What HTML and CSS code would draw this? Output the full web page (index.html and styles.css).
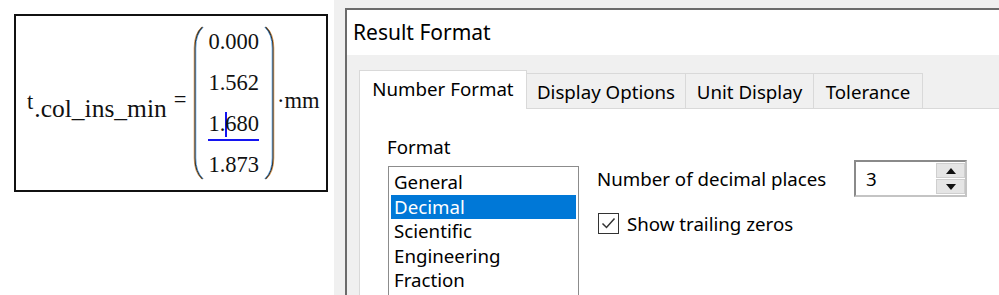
FILE: index.html
```html
<!DOCTYPE html>
<html lang="en">
<head>
<meta charset="UTF-8" />
<title>Result Format</title>
<link rel="stylesheet" href="styles.css">
</head>
<body>
<div class="sheet">
  <div class="region">
    <span class="var">t<span class="sub">.col_ins_min</span></span>
    <span class="eq">=</span>
    <div class="matrix">
      <svg class="paren" width="12" height="154" viewBox="0 0 12 154">
        <path d="M10.5 1 Q3 8 3 22 L3 132 Q3 146 10.5 153" stroke="#e8a050" stroke-width="1" fill="none" transform="translate(-0.8 0)"/>
        <path d="M10.5 1 Q3 8 3 22 L3 132 Q3 146 10.5 153" stroke="#58a8f0" stroke-width="1" fill="none" transform="translate(0.8 0)"/>
        <path d="M10.5 1 Q3 8 3 22 L3 132 Q3 146 10.5 153" stroke="#333" stroke-width="1.1" fill="none"/>
      </svg>
      <div class="cells">
        <div class="cell">0.000</div>
        <div class="cell">1.562</div>
        <div class="cell"><span class="num sel">1.<span class="cursor"></span>680</span></div>
        <div class="cell">1.873</div>
      </div>
      <svg class="paren" width="12" height="154" viewBox="0 0 12 154">
        <path d="M1.5 1 Q9 8 9 22 L9 132 Q9 146 1.5 153" stroke="#e8a050" stroke-width="1" fill="none" transform="translate(0.8 0)"/>
        <path d="M1.5 1 Q9 8 9 22 L9 132 Q9 146 1.5 153" stroke="#58a8f0" stroke-width="1" fill="none" transform="translate(-0.8 0)"/>
        <path d="M1.5 1 Q9 8 9 22 L9 132 Q9 146 1.5 153" stroke="#333" stroke-width="1.1" fill="none"/>
      </svg>
    </div>
    <span class="unit">&middot;mm</span>
  </div>
</div>

<div class="desk">
  <div class="dialog">
    <div class="titlebar">Result Format</div>
    <div class="dialog-body">
      <div class="tabs">
        <div class="tab active" style="width:168px">Number Format</div>
        <div class="tab" style="width:159px">Display Options</div>
        <div class="tab" style="width:128px">Unit Display</div>
        <div class="tab" style="width:109px">Tolerance</div>
      </div>
      <div class="panel">
        <div class="format-col">
          <div class="label">Format</div>
          <ul class="listbox">
            <li>General</li>
            <li class="selected">Decimal</li>
            <li>Scientific</li>
            <li>Engineering</li>
            <li>Fraction</li>
          </ul>
        </div>
        <div class="options-col">
          <div class="option-row">
            <span class="option-label">Number of decimal places</span>
            <div class="spinbox">
              <span class="spin-value">3</span>
              <div class="spin-buttons">
                <div class="spin-btn"><svg width="10" height="6" viewBox="0 0 10 6"><path d="M0 6 L5 0 L10 6 Z" fill="#111"/></svg></div>
                <div class="spin-btn"><svg width="10" height="6" viewBox="0 0 10 6"><path d="M0 0 L5 6 L10 0 Z" fill="#111"/></svg></div>
              </div>
            </div>
          </div>
          <div class="check-row">
            <span class="checkbox">
              <svg width="19" height="19" viewBox="0 0 19 19"><path d="M3.5 9.5 L7.5 13.5 L15.5 4.5" stroke="#333" stroke-width="1.5" fill="none"/></svg>
            </span>
            <span>Show trailing zeros</span>
          </div>
        </div>
      </div>
    </div>
  </div>
</div>
</body>
</html>
```

FILE: styles.css
```css
body {
  margin: 0;
  height: 295px;
  overflow: hidden;
  display: flex;
  background: #ffffff;
}

/* Worksheet region */
.sheet {
  width: 334px;
  padding: 14px 0 0 14px;
  box-sizing: border-box;
}

.region {
  width: 314px;
  height: 178px;
  box-sizing: border-box;
  border: 2px solid #111;
  display: flex;
  align-items: center;
  padding-left: 11px;
  font-family: "Liberation Serif", "Times New Roman", serif;
  font-size: 22.5px;
  color: #111;
}

.var {
  line-height: 1;
  margin-top: -4px;
}

.var .sub {
  font-size: 25.5px;
  position: relative;
  top: 8px;
  margin-left: 1px;
}

.eq {
  margin: -6px 6px 0 7px;
}

.matrix {
  display: flex;
  align-items: center;
}

.cells {
  display: flex;
  flex-direction: column;
  padding: 0 5px 0 4px;
}

.cell {
  height: 41px;
  line-height: 41px;
  text-align: center;
}

.num.sel {
  display: inline-block;
  line-height: 24px;
  border-bottom: 2px solid #1414f0;
  padding-bottom: 2px;
}

.cursor {
  display: inline-block;
  width: 0;
  height: 25px;
  border-left: 2px solid #1414f0;
  vertical-align: -6px;
  margin-right: -2px;
}

.unit {
  margin-left: 1px;
  margin-top: -4px;
}

/* Dialog */
.desk {
  flex: 1;
  background: #f0f0f0;
  padding: 8px 0 0 11px;
  display: flex;
}

.dialog {
  flex: 1;
  display: flex;
  flex-direction: column;
  border-left: 2px solid #6b6b6b;
  border-top: 2px solid #6b6b6b;
  background: #f0f0f0;
  font-family: "Noto Sans", "Open Sans", sans-serif;
  font-size: 18.7px;
  color: #000;
  overflow: hidden;
}

.titlebar {
  background: #fff;
  height: 45px;
  line-height: 45px;
  padding-left: 6px;
  font-size: 21px;
}

.dialog-body {
  flex: 1;
  display: flex;
  flex-direction: column;
  padding: 15px 0 0 12px;
}

.tabs {
  display: flex;
  align-items: flex-end;
}

.tab {
  height: 35px;
  line-height: 35px;
  box-sizing: border-box;
  border: 1px solid #d9d9d9;
  border-bottom: none;
  border-left: none;
  background: #f0f0f0;
  text-align: center;
}

.tab.active {
  height: 39px;
  line-height: 36px;
  background: #fff;
  border-left: 1px solid #d9d9d9;
  margin-bottom: -1px;
  position: relative;
  z-index: 1;
}

.panel {
  flex: 1;
  background: #fff;
  border-top: 1px solid #d9d9d9;
  border-left: 1px solid #d9d9d9;
  display: flex;
  padding: 26px 0 0 27px;
  overflow: hidden;
}

.label {
  line-height: 24px;
  margin-bottom: 7px;
}

.listbox {
  list-style: none;
  margin: 0 0 0 1px;
  padding: 3px 2px 0 2px;
  width: 191px;
  height: 140px;
  box-sizing: border-box;
  border: 1px solid #8c8c8c;
}

.listbox li {
  height: 24.5px;
  line-height: 24px;
  padding-left: 3px;
}

.listbox li.selected {
  background: #0078d7;
  color: #fff;
}

.options-col {
  margin: 25px 0 0 18px;
}

.option-row {
  display: flex;
  align-items: center;
}

.option-label {
  width: 257px;
}

.spinbox {
  width: 113px;
  height: 37px;
  box-sizing: border-box;
  border: 2px solid #c4c4c4;
  border-top-color: #8a8a8a;
  border-left-color: #8a8a8a;
  display: flex;
  background: #fff;
}

.spin-value {
  flex: 1;
  padding-left: 10px;
  line-height: 33px;
}

.spin-buttons {
  width: 29px;
  display: flex;
  flex-direction: column;
  gap: 1px;
  padding: 1px 0;
}

.spin-btn {
  flex: 1;
  background: #e5e5e5;
  border: 1px solid #cfcfcf;
  display: flex;
  align-items: center;
  justify-content: center;
}

.check-row {
  display: flex;
  align-items: center;
  margin-top: 14px;
  margin-left: 1px;
}

.checkbox {
  width: 21px;
  height: 21px;
  box-sizing: border-box;
  border: 1px solid #333;
  background: #fff;
  display: flex;
  align-items: center;
  justify-content: center;
  margin-right: 8px;
}
```
